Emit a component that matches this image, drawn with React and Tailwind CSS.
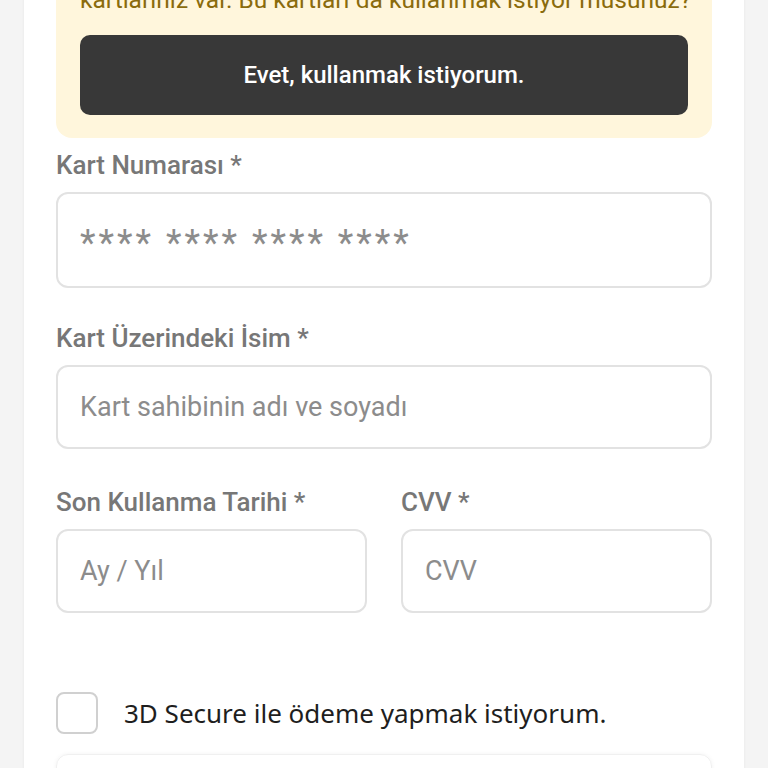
import React from 'react';

const Field = ({ label, placeholder, tall, className = '', inputClass = 'text-[27px]' }) => (
    <div className={`flex flex-col ${className}`}>
        <label className="text-[26px] font-medium text-[#777777] leading-[30px] mb-[12px]">{label}</label>
        <input
            placeholder={placeholder}
            className={`w-full rounded-xl border-2 border-[#e2e2e2] bg-white px-[22px] text-[#333] placeholder:text-[#8c8c8c] outline-none ${tall ? 'h-[96px]' : 'h-[84px]'} ${inputClass}`}
        />
    </div>
);

const App = () => {
    return (
        <div className="min-h-screen bg-[#f4f4f4] overflow-hidden font-['Roboto',sans-serif]">
            <div className="mx-[24px] bg-white shadow-[0_0_3px_rgba(0,0,0,0.06)] px-[32px] pb-10 min-h-[768px]">
                {/* Saved cards notice */}
                <div className="-mt-[16px] bg-[#fff6dc] rounded-b-2xl px-[24px] pb-[23px]">
                    <p className="text-center text-[24.5px] leading-[32px] text-[#8a6b0c] whitespace-nowrap">
                        kartlarınız var. Bu kartları da kullanmak istiyor musunuz?
                    </p>
                    <button className="mt-[19px] w-full h-[80px] rounded-[10px] bg-[#383838] text-white text-[24px] font-medium">
                        Evet, kullanmak istiyorum.
                    </button>
                </div>

                <Field label="Kart Numarası *" placeholder="**** **** **** ****" tall className="mt-[12px]" inputClass="text-[36px] tracking-[3px] pt-[6px]" />
                <Field label="Kart Üzerindeki İsim *" placeholder="Kart sahibinin adı ve soyadı" className="mt-[35px]" />

                <div className="grid grid-cols-2 gap-[34px] mt-[38px]">
                    <Field label="Son Kullanma Tarihi *" placeholder="Ay / Yıl" />
                    <Field label="CVV *" placeholder="CVV" />
                </div>

                <label className="flex items-center gap-[26px] mt-[79px]">
                    <span className="w-[42px] h-[42px] rounded-lg border-2 border-[#d0d0d0] bg-white shrink-0"></span>
                    <span className="font-['Noto_Sans',sans-serif] text-[26px] leading-[34px] text-[#1e1e1e]">3D Secure ile ödeme yapmak istiyorum.</span>
                </label>

                <div className="mt-[20px] h-[80px] rounded-xl border border-[#f0f0f0] shadow-[0_0_4px_rgba(0,0,0,0.05)]"></div>
            </div>
        </div>
    );
};

export default App;
